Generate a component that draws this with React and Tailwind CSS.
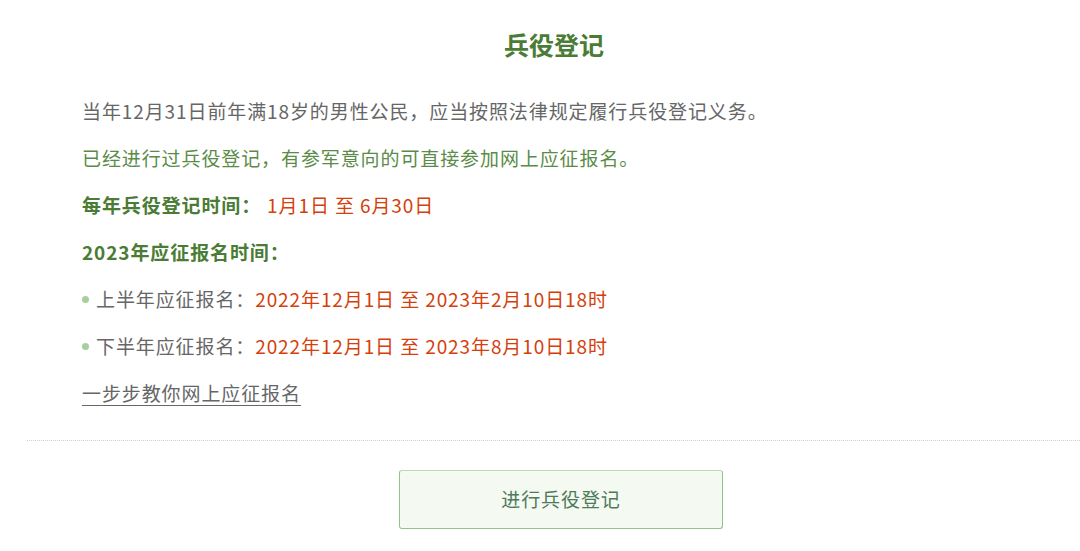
import React from "react";

const font = { fontFamily: '"Noto Sans CJK SC", "Noto Sans", sans-serif' };

const Row = ({ label, value }) => (
  <div className="flex items-center h-[47px]">
    <span className="w-[7px] h-[7px] rounded-full bg-[#a6cf9b] mr-[7px] mt-[2px]" />
    <span className="text-[#666666]">{label}</span>
    <span className="text-[#d43f0c]">{value}</span>
  </div>
);

export default function App() {
  return (
    <div
      className="w-[1080px] h-[551px] bg-white overflow-hidden"
      style={font}
    >
      <h1 className="text-center text-[25px] font-bold text-[#4a7c35] pt-[27px] pl-[28px] leading-[34px]">
        兵役登记
      </h1>

      <div className="pl-[82px] pt-[26px] text-[19px] leading-[47px] tracking-[0.9px]">
        <p className="text-[#666666]">
          当年12月31日前年满18岁的男性公民，应当按照法律规定履行兵役登记义务。
        </p>
        <p className="text-[#5a8c48]">
          已经进行过兵役登记，有参军意向的可直接参加网上应征报名。
        </p>
        <p>
          <span className="font-bold text-[#4a7c35]">每年兵役登记时间：</span>
          <span className="text-[#d43f0c] ml-[6px]">1月1日 至 6月30日</span>
        </p>
        <p className="font-bold text-[#4a7c35]">2023年应征报名时间：</p>
        <Row label="上半年应征报名：" value="2022年12月1日 至 2023年2月10日18时" />
        <Row label="下半年应征报名：" value="2022年12月1日 至 2023年8月10日18时" />
        <p>
          <a className="text-[#666666] underline underline-offset-[4px]">
            一步步教你网上应征报名
          </a>
        </p>
      </div>

      <div className="ml-[27px] mt-[24px] border-t border-dotted border-[#cfcfcf]" />

      <div className="flex justify-center pl-[42px] pt-[29px]">
        <button className="w-[324px] h-[59px] rounded-[3px] bg-[#f4f9f1] border border-[#93c28b] border-t-[#b8d9b1] text-[19px] text-[#4e7a5a] tracking-[0.9px]">
          进行兵役登记
        </button>
      </div>
    </div>
  );
}
